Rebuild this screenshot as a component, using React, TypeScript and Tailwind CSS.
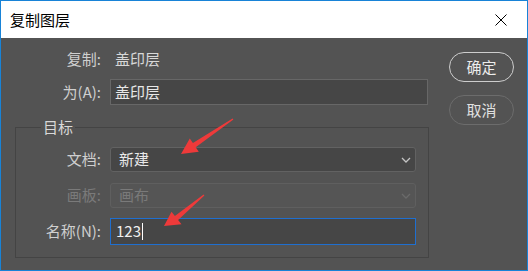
const font = "font-['Noto_Sans_CJK_SC','Noto_Sans',sans-serif]";

/** 下拉箭头 */
function Chevron({ dim }: { dim?: boolean }) {
  return (
    <svg width="10" height="6" viewBox="0 0 10 6" className="mr-[4px]">
      <path d="M1 1 L5 5 L9 1" fill="none" stroke={dim ? '#6a6a6a' : '#c4c4c4'} strokeWidth="1.3" />
    </svg>
  );
}

/** 关闭按钮的叉 */
function CloseX() {
  return (
    <svg width="12" height="12" viewBox="0 0 12 12">
      <path d="M0.5 0.5 L11.5 11.5 M11.5 0.5 L0.5 11.5" stroke="#000" strokeWidth="1" />
    </svg>
  );
}

/** 红色标注箭头（截图上的标记） */
function Arrows() {
  return (
    <svg className="pointer-events-none absolute left-0 top-0" width="528" height="271">
      <polygon
        points="232.4,118.6 194.7,146.2 197.8,150.7 180,153 188.8,137.5 191.9,142 231.6,117.4"
        fill="#ee3a3a"
      />
      <polygon
        points="203.4,194.5 177.1,219 180.5,223.2 163,225 170.5,210.8 173.9,215 202.6,193.5"
        fill="#ee3a3a"
      />
    </svg>
  );
}

export default function App() {
  return (
    <div
      className={`relative flex h-[271px] w-[528px] flex-col border border-[#1883d7] bg-[#535353] ${font}`}
    >
      {/* 标题栏 */}
      <div className="flex h-[37px] items-center justify-between bg-white pl-[9px] pr-[20px]">
        <span className="text-[15px] leading-none text-black">复制图层</span>
        <CloseX />
      </div>

      <div className="flex flex-1">
        {/* 左侧表单 */}
        <div className="w-[427px] pt-[8px]">
          <div className="flex h-[26px] items-center text-[15px]">
            <span className="w-[100px] text-right text-[#cfcfcf]">复制:</span>
            <span className="ml-[14px] text-[#d8d8d8]">盖印层</span>
          </div>

          <div className="mt-[7px] flex items-center text-[15px]">
            <span className="w-[100px] text-right text-[#cfcfcf]">为(A):</span>
            <div className="ml-[9px] flex h-[26px] w-[318px] items-center border border-[#676767] bg-[#464646] pl-[4px] text-[#e8e8e8]">
              盖印层
            </div>
          </div>

          <fieldset className="ml-[14px] mt-[12px] h-[141px] w-[414px] border border-[#444444]">
            <legend className="ml-[25px] px-[2px] text-[15px] leading-[20px] text-[#d8d8d8]">目标</legend>

            <div className="mt-[10px] flex items-center text-[15px]">
              <span className="w-[85px] text-right text-[#cfcfcf]">文档:</span>
              <div className="ml-[9px] flex h-[25px] w-[306px] items-center justify-between rounded-[3px] border border-[#626262] bg-[#464646] pl-[8px] text-[#e8e8e8]">
                新建
                <Chevron />
              </div>
            </div>

            <div className="mt-[11px] flex items-center text-[15px]">
              <span className="w-[85px] text-right text-[#7a7a7a]">画板:</span>
              <div className="ml-[9px] flex h-[25px] w-[306px] items-center justify-between rounded-[3px] border border-[#5f5f5f] bg-[#555555] pl-[8px] text-[#7a7a7a]">
                画布
                <Chevron dim />
              </div>
            </div>

            <div className="mt-[10px] flex items-center text-[15px]">
              <span className="w-[85px] text-right text-[#cfcfcf]">名称(N):</span>
              <div className="ml-[9px] flex h-[27px] w-[306px] items-center border border-[#1f6fd0] bg-[#464646] pl-[5px] text-[#f0f0f0]">
                123
                <span className="ml-[1px] h-[17px] w-px bg-white" />
              </div>
            </div>
          </fieldset>
        </div>

        {/* 右侧按钮 */}
        <div className="ml-[21px] flex flex-col gap-[13px] pt-[14px]">
          <button className="h-[30px] w-[65px] rounded-full border-[1.5px] border-[#cdcdcd] text-[15px] text-[#ececec]">
            确定
          </button>
          <button className="h-[30px] w-[65px] rounded-full border-[1.5px] border-[#6c6c6c] text-[15px] text-[#e0e0e0]">
            取消
          </button>
        </div>
      </div>

      <Arrows />
    </div>
  );
}
